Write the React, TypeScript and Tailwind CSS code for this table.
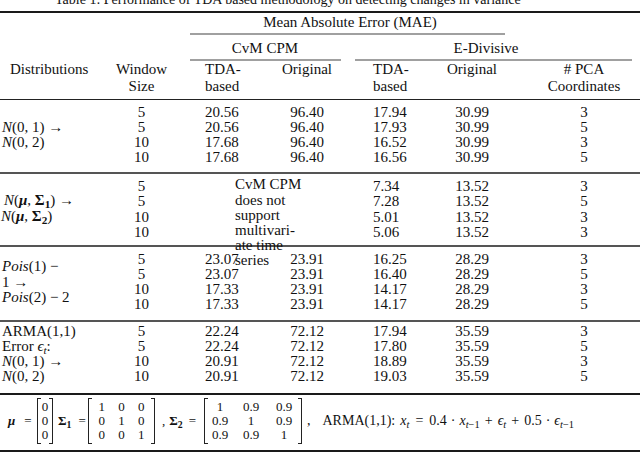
import React from "react";

type Cells = [string, string, string, string, string, string];

function DataRows({ rows, lead }: { rows: Cells[]; lead: string }) {
  return (
    <div className={"grid grid-cols-[47px_102px_80px_83px_84px_126px] " + lead}>
      {rows.map((r, i) => (
        <React.Fragment key={i}>
          <div className="text-center">{r[0]}</div>
          <div className="pl-[40px]">{r[1]}</div>
          <div className="text-center">{r[2]}</div>
          <div className="pl-[26px]">{r[3]}</div>
          <div className="text-center">{r[4]}</div>
          <div className="pl-[14px] text-center">{r[5]}</div>
        </React.Fragment>
      ))}
    </div>
  );
}

function Bracket({ side }: { side: "l" | "r" }) {
  return (
    <div
      className={
        side === "l"
          ? "w-[4px] h-[46px] border-l border-y border-[#222]"
          : "w-[4px] h-[46px] border-r border-y border-[#222]"
      }
    />
  );
}

const g1: Cells[] = [
  ["5", "20.56", "96.40", "17.94", "30.99", "3"],
  ["5", "20.56", "96.40", "17.93", "30.99", "5"],
  ["10", "17.68", "96.40", "16.52", "30.99", "3"],
  ["10", "17.68", "96.40", "16.56", "30.99", "5"],
];
const g2: Cells[] = [
  ["5", "", "", "7.34", "13.52", "3"],
  ["5", "", "", "7.28", "13.52", "5"],
  ["10", "", "", "5.01", "13.52", "3"],
  ["10", "", "", "5.06", "13.52", "3"],
];
const g3: Cells[] = [
  ["5", "23.07", "23.91", "16.25", "28.29", "3"],
  ["5", "23.07", "23.91", "16.40", "28.29", "5"],
  ["10", "17.33", "23.91", "14.17", "28.29", "3"],
  ["10", "17.33", "23.91", "14.17", "28.29", "5"],
];
const g4: Cells[] = [
  ["5", "22.24", "72.12", "17.94", "35.59", "3"],
  ["5", "22.24", "72.12", "17.80", "35.59", "5"],
  ["10", "20.91", "72.12", "18.89", "35.59", "3"],
  ["10", "20.91", "72.12", "19.03", "35.59", "5"],
];

export default function App() {
  return (
    <div className="w-[640px] h-[452px] overflow-hidden bg-white text-[#111] text-[15px] font-['Liberation_Serif','DejaVu_Serif',serif]">
      {/* caption */}
      <div className="-mt-[8px] mb-[4px] h-[15px] leading-[15px] text-[14px] pl-[55px] whitespace-nowrap">
        Table 1: Performance of TDA based methodology on detecting changes in variance
      </div>
      <div className="h-[2px] bg-[#1a1a1a]" />

      {/* MAE header */}
      <div className="mt-[2px] leading-[15px] ml-[190px] w-[320px] text-center whitespace-nowrap">
        Mean Absolute Error (MAE)
      </div>
      <div className="mt-[3px] ml-[190px] w-[315px] h-[2px] bg-[#a0a0a0]" />

      {/* method header */}
      <div className="mt-[5.5px] leading-[15px] flex whitespace-nowrap">
        <div className="ml-[190px] w-[150px] text-center">CvM CPM</div>
        <div className="w-[292px] text-center">E-Divisive</div>
      </div>
      <div className="mt-[3.5px] flex">
        <div className="ml-[190px] w-[151px] h-[2px] bg-[#a0a0a0]" />
        <div className="ml-[14px] w-[277px] h-[2px] bg-[#a0a0a0]" />
      </div>

      {/* column header */}
      <div className="grid grid-cols-[118px_47px_102px_80px_83px_84px_126px] leading-[16.5px] whitespace-nowrap">
        <div className="pl-[10px]">Distributions</div>
        <div className="flex flex-col items-center">
          <span>Window</span>
          <span>Size</span>
        </div>
        <div className="pl-[40px]">
          TDA-
          <br />
          based
        </div>
        <div className="text-center">Original</div>
        <div className="pl-[26px]">
          TDA-
          <br />
          based
        </div>
        <div className="text-center">Original</div>
        <div className="pl-[14px] text-center">
          # PCA
          <br />
          Coordinates
        </div>
      </div>
      <div className="mt-[4.5px] h-[1.5px] bg-[#222]" />

      {/* group 1 */}
      <div className="flex pt-[5.4px] pb-[7px]">
        <div className="w-[118px] pl-[2px] flex flex-col justify-center leading-[15px] whitespace-nowrap">
          <div>
            <i>N</i>(0, 1) →
          </div>
          <div>
            <i>N</i>(0, 2)
          </div>
        </div>
        <DataRows rows={g1} lead="leading-[15px]" />
      </div>
      <div className="h-[2px] bg-[#555]" />

      {/* group 2 */}
      <div className="relative flex pt-[4.5px] pb-[4.5px]">
        <div className="w-[118px] flex flex-col justify-center pb-[3px] leading-[16px] whitespace-nowrap">
          <div className="pl-[4px]">
            <i>N</i>(<b><i>μ</i></b>, <b>Σ</b>
            <sub className="font-bold">1</sub>) →
          </div>
          <div className="pl-[1px]">
            <i>N</i>(<b><i>μ</i></b>, <b>Σ</b>
            <sub className="font-bold">2</sub>)
          </div>
        </div>
        <DataRows rows={g2} lead="leading-[15.5px]" />
        <div className="absolute left-[235px] top-[3px] leading-[15.2px] whitespace-nowrap">
          CvM CPM
          <br />
          does not
          <br />
          support
          <br />
          multivari-
          <br />
          ate time
          <br />
          series
        </div>
      </div>
      <div className="h-[2px] bg-[#555]" />

      {/* group 3 */}
      <div className="flex pt-[5px] pb-[7.6px]">
        <div className="w-[118px] pl-[2px] flex flex-col justify-center leading-[15.5px] whitespace-nowrap">
          <div>
            <i>Pois</i>(1) −
          </div>
          <div>1 →</div>
          <div>
            <i>Pois</i>(2) − 2
          </div>
        </div>
        <DataRows rows={g3} lead="leading-[15px]" />
      </div>
      <div className="h-[2px] bg-[#555]" />

      {/* group 4 */}
      <div className="flex pt-[2.4px] pb-[10px]">
        <div className="w-[118px] pl-[2px] flex flex-col leading-[14.75px] whitespace-nowrap">
          <div>ARMA(1,1)</div>
          <div>
            Error <i>ϵ</i>
            <sub>
              <i>t</i>
            </sub>
            :
          </div>
          <div>
            <i>N</i>(0, 1) →
          </div>
          <div>
            <i>N</i>(0, 2)
          </div>
        </div>
        <DataRows rows={g4} lead="leading-[14.75px]" />
      </div>
      <div className="h-[2px] bg-[#1a1a1a]" />

      {/* matrix footnote row */}
      <div className="h-[55px] flex items-center pb-[3px] text-[13px] leading-[14px] whitespace-nowrap">
        <div className="w-[37px] pl-[8px] flex">
          <b>
            <i>μ</i>
          </b>
          <span className="ml-[9px]">=</span>
        </div>
        <Bracket side="l" />
        <div className="w-[8px] flex flex-col items-center">
          <span>0</span>
          <span>0</span>
          <span>0</span>
        </div>
        <Bracket side="r" />
        <div className="w-[35px] pl-[5px] flex">
          <span>
            <b>Σ</b>
            <sub className="font-bold">1</sub>
          </span>
          <span className="ml-[7px]">=</span>
        </div>
        <Bracket side="l" />
        <div className="w-[59px] grid grid-cols-3 text-center">
          <span>1</span>
          <span>0</span>
          <span>0</span>
          <span>0</span>
          <span>1</span>
          <span>0</span>
          <span>0</span>
          <span>0</span>
          <span>1</span>
        </div>
        <Bracket side="r" />
        <div className="w-[49px] pl-[7px] flex">
          <span>,</span>
          <span className="ml-[4px]">
            <b>Σ</b>
            <sub className="font-bold">2</sub>
          </span>
          <span className="ml-[6px]">=</span>
        </div>
        <Bracket side="l" />
        <div className="w-[90px] grid grid-cols-[24px_38px_28px] text-center">
          <span>1</span>
          <span>0.9</span>
          <span>0.9</span>
          <span>0.9</span>
          <span>1</span>
          <span>0.9</span>
          <span>0.9</span>
          <span>0.9</span>
          <span>1</span>
        </div>
        <Bracket side="r" />
        <div className="pl-[5px] text-[14px] flex items-baseline">
          <span>,</span>
          <span className="ml-[12px]">ARMA(1,1):</span>
          <span className="ml-[5px]">
            <i>x</i>
            <sub>
              <i>t</i>
            </sub>
          </span>
          <span className="mx-[6px]">=</span>
          <span>0.4</span>
          <span className="mx-[4px]">·</span>
          <span>
            <i>x</i>
            <sub>
              <i>t</i>−1
            </sub>
          </span>
          <span className="mx-[5px]">+</span>
          <span>
            <i>ϵ</i>
            <sub>
              <i>t</i>
            </sub>
          </span>
          <span className="mx-[5px]">+</span>
          <span>0.5</span>
          <span className="mx-[4px]">·</span>
          <span>
            <i>ϵ</i>
            <sub>
              <i>t</i>−1
            </sub>
          </span>
        </div>
      </div>
      <div className="h-[2px] bg-[#1a1a1a]" />
    </div>
  );
}
